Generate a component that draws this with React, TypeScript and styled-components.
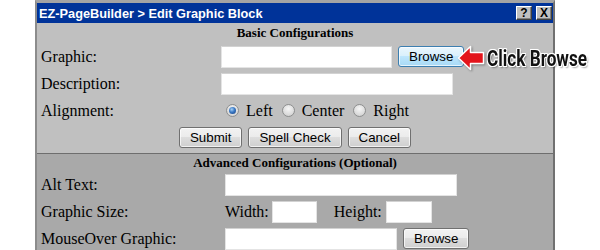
import React from 'react';
import styled, { createGlobalStyle } from 'styled-components';

const GlobalStyle = createGlobalStyle`
  body {
    margin: 0;
    background: #fff;
  }
`;

const Page = styled.div`
  width: 600px;
  height: 250px;
  overflow: hidden;
  padding-left: 35px;
  box-sizing: border-box;
`;

const Window = styled.div`
  position: relative;
  width: 520px;
  box-sizing: border-box;
  border: 2px solid #8c8c8c;
  border-top: 3px solid #a4a4a4;
  border-right-color: #707070;
  border-bottom: none;
`;

const TitleBar = styled.div`
  display: flex;
  align-items: center;
  justify-content: space-between;
  height: 20px;
  padding: 0 1px 0 2px;
  background: #003399;
  color: #fff;
  font-family: 'Liberation Sans', Arial, sans-serif;
  font-weight: bold;
  font-size: 12.75px;
`;

const TitleButtons = styled.div`
  display: flex;
  gap: 4px;
`;

const TitleButton = styled.span`
  display: flex;
  align-items: center;
  justify-content: center;
  width: 16px;
  height: 14px;
  box-sizing: border-box;
  background: #c0c0c0;
  border: 1px solid;
  border-color: #fff #404040 #404040 #fff;
  box-shadow: inset -1px -1px #808080;
  color: #000;
  font-family: 'Liberation Sans', Arial, sans-serif;
  font-size: 12px;
  font-weight: bold;
`;

const Section = styled.div<{ $advanced?: boolean }>`
  background: ${p => (p.$advanced ? '#a9a9a9' : '#c0c0c0')};
  border-top: ${p => (p.$advanced ? '1px solid #6e6e6e' : 'none')};
  padding-bottom: ${p => (p.$advanced ? '20px' : '2px')};
  font-family: 'Liberation Serif', 'Times New Roman', serif;
  font-size: 16px;
  color: #000;
`;

const SectionHeader = styled.div<{ $h: number }>`
  height: ${p => p.$h}px;
  line-height: ${p => p.$h}px;
  text-align: center;
  font-weight: bold;
  font-size: 13px;
`;

const FormGrid = styled.div<{ $labelWidth: number }>`
  display: grid;
  grid-template-columns: ${p => p.$labelWidth}px 1fr;
  grid-auto-rows: 27px;
  align-items: center;
  padding-left: 4px;
`;

const Label = styled.div`
  white-space: nowrap;
`;

const Field = styled.div`
  display: flex;
  align-items: center;
  white-space: nowrap;
`;

const TextInput = styled.input<{ $w: number }>`
  width: ${p => p.$w}px;
  height: 22px;
  box-sizing: border-box;
  margin: 0;
  border: 1px solid #e4e4e4;
  border-top-color: #d2d2d2;
  background: #fff;
`;

const ButtonRow = styled.div`
  grid-column: 1 / -1;
  display: flex;
  justify-content: center;
  gap: 6px;
  padding-right: 4px;
`;

const Button = styled.button<{ $hover?: boolean; $ml?: number }>`
  height: 21px;
  margin: 0 0 0 ${p => p.$ml ?? 0}px;
  padding: 0 10px;
  border: 1px solid ${p => (p.$hover ? '#3c7fb1' : '#707070')};
  border-radius: 3px;
  background: ${p =>
    p.$hover
      ? 'linear-gradient(#eaf6fd 0%, #d9f0fc 50%, #bee6fd 50%, #a7d9f5 100%)'
      : 'linear-gradient(#f2f2f2 0%, #ebebeb 50%, #dddddd 50%, #cfcfcf 100%)'};
  box-shadow: inset 0 0 0 1px rgba(255, 255, 255, 0.7);
  font-family: 'Liberation Sans', Arial, sans-serif;
  font-size: 13.33px;
  color: #000;
  line-height: 19px;
`;

const Option = styled.span`
  display: inline-flex;
  align-items: center;
  margin-right: 4px;
`;

const Radio = styled.span<{ $checked?: boolean }>`
  position: relative;
  width: 13px;
  height: 13px;
  box-sizing: border-box;
  margin: 0 7px 0 5px;
  border-radius: 50%;
  border: 1px solid #8e8f8f;
  background: radial-gradient(circle at 50% 35%, #f6f6f6 0%, #dcdcdc 60%, #c8c8c8 100%);
  &::after {
    content: '';
    display: ${p => (p.$checked ? 'block' : 'none')};
    position: absolute;
    left: 2px;
    top: 2px;
    width: 7px;
    height: 7px;
    border-radius: 50%;
    background: radial-gradient(circle at 40% 35%, #a6d2f7 0%, #3a78c4 45%, #173f7d 100%);
  }
`;

const Gap = styled.span<{ $w: number }>`
  display: inline-block;
  width: ${p => p.$w}px;
`;

const Callout = styled.div`
  position: absolute;
  left: 420px;
  top: 42px;
  display: flex;
  align-items: center;
  pointer-events: none;
`;

const CalloutText = styled.span`
  display: inline-block;
  margin-left: 2px;
  font-family: Roboto, 'Open Sans', sans-serif;
  font-weight: bold;
  font-size: 22px;
  color: #111;
  transform: scaleX(0.78);
  transform-origin: left center;
  white-space: nowrap;
  text-shadow:
    1px 0 #fff, -1px 0 #fff, 0 1px #fff, 0 -1px #fff,
    1px 1px #fff, -1px -1px #fff, 1px -1px #fff, -1px 1px #fff,
    2px 2px 2px rgba(0, 0, 0, 0.35);
`;

const Arrow = () => (
  <svg width="28" height="26" viewBox="0 0 28 26" style={{ filter: 'drop-shadow(1px 1px 1px rgba(0,0,0,0.35))' }}>
    <polygon
      points="1.5,13 13.5,1.5 13.5,7.5 26.5,7.5 26.5,18.5 13.5,18.5 13.5,24.5"
      fill="#e3141b"
      stroke="#fff"
      strokeWidth="1.5"
      strokeLinejoin="round"
    />
  </svg>
);

export default function App() {
  return (
    <Page>
      <GlobalStyle />
      <Window>
        <TitleBar>
          <span>EZ-PageBuilder &gt; Edit Graphic Block</span>
          <TitleButtons>
            <TitleButton>?</TitleButton>
            <TitleButton>X</TitleButton>
          </TitleButtons>
        </TitleBar>

        <Section>
          <SectionHeader $h={20}>Basic Configurations</SectionHeader>
          <FormGrid $labelWidth={180}>
            <Label>Graphic:</Label>
            <Field>
              <TextInput $w={171} />
              <Button $hover $ml={6}>Browse</Button>
            </Field>

            <Label>Description:</Label>
            <Field>
              <TextInput $w={232} />
            </Field>

            <Label>Alignment:</Label>
            <Field>
              <Option><Radio $checked />Left</Option>
              <Option><Radio />Center</Option>
              <Option><Radio />Right</Option>
            </Field>

            <ButtonRow>
              <Button>Submit</Button>
              <Button>Spell Check</Button>
              <Button>Cancel</Button>
            </ButtonRow>
          </FormGrid>
        </Section>

        <Section $advanced>
          <SectionHeader $h={17}>Advanced Configurations (Optional)</SectionHeader>
          <FormGrid $labelWidth={184}>
            <Label>Alt Text:</Label>
            <Field>
              <TextInput $w={232} />
            </Field>

            <Label>Graphic Size:</Label>
            <Field>
              Width:<Gap $w={3} />
              <TextInput $w={45} />
              <Gap $w={17} />
              Height:<Gap $w={4} />
              <TextInput $w={46} />
            </Field>

            <Label>MouseOver Graphic:</Label>
            <Field>
              <TextInput $w={172} />
              <Button $ml={6}>Browse</Button>
            </Field>
          </FormGrid>
        </Section>

        <Callout>
          <Arrow />
          <CalloutText>Click Browse</CalloutText>
        </Callout>
      </Window>
    </Page>
  );
}
